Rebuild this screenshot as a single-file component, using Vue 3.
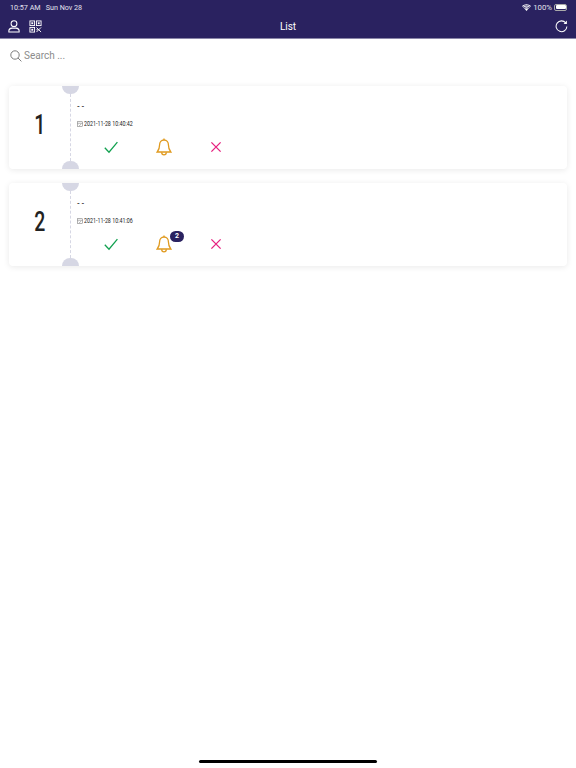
<template>
  <div class="page">
    <header class="top">
      <div class="status">
        <div class="status-left">
          <span>10:57 AM</span>
          <span>Sun Nov 28</span>
        </div>
        <div class="status-right">
          <svg width="9" height="7" viewBox="0 0 20 15">
            <path d="M10 15 L6.6 11.2 A5 5 0 0 1 13.4 11.2 Z" fill="#fff" />
            <path d="M4.8 9.2 A8 8 0 0 1 15.2 9.2 L13.9 10.7 A6 6 0 0 0 6.1 10.7 Z" fill="#fff" />
            <path d="M2.3 6.5 A11.5 11.5 0 0 1 17.7 6.5 L16.3 8 A9.5 9.5 0 0 0 3.7 8 Z" fill="#fff" />
            <path d="M0 4 A15 15 0 0 1 20 4 L18.6 5.6 A13 13 0 0 0 1.4 5.6 Z" fill="#fff" />
          </svg>
          <span class="pct">100%</span>
          <span class="battery"><i></i></span>
        </div>
      </div>
      <div class="nav">
        <div class="nav-left">
          <svg width="12" height="13" viewBox="0 0 14 15" fill="none" stroke="#fff" stroke-width="1.2">
            <circle cx="7" cy="4.2" r="3.4" />
            <path d="M1 14 V12.6 C1 10.6 3 9.6 4.6 9.4 H9.4 C11 9.6 13 10.6 13 12.6 V14 Z" />
          </svg>
          <svg width="13" height="13" viewBox="0 0 14 14" fill="none" stroke="#fff" stroke-width="1">
            <rect x="1" y="1" width="5" height="5" />
            <rect x="8" y="1" width="5" height="5" />
            <rect x="1" y="8" width="5" height="5" />
            <rect x="2.5" y="2.5" width="2" height="2" fill="#fff" stroke="none" />
            <rect x="9.5" y="2.5" width="2" height="2" fill="#fff" stroke="none" />
            <rect x="2.5" y="9.5" width="2" height="2" fill="#fff" stroke="none" />
            <path d="M8 8 L13 13 M13 8 L8 13 M8 10.5 H9.5" />
          </svg>
        </div>
        <span class="nav-title">List</span>
        <svg width="13" height="13" viewBox="0 0 14 14" fill="none" stroke="#fff" stroke-width="1.1">
          <path d="M11.6 3.2 A5.8 5.8 0 1 0 12.8 7" />
          <path d="M12.8 0.6 V4.2 H9.2 Z" fill="#fff" stroke="none" />
        </svg>
      </div>
    </header>

    <div class="search">
      <svg width="12" height="12" viewBox="0 0 12 12" fill="none" stroke="#6f6f6f" stroke-width="0.9">
        <circle cx="5" cy="5" r="4.2" />
        <path d="M8 8 L11.4 11.4" />
      </svg>
      <span>Search ...</span>
    </div>

    <div class="list">
      <div v-for="item in items" :key="item.no" class="card">
        <div class="no"><span>{{ item.no }}</span></div>
        <div class="divider"></div>
        <div class="body">
          <div class="name">- -</div>
          <div class="time">
            <svg width="6" height="6" viewBox="0 0 12 12" fill="none" stroke="#666" stroke-width="1">
              <rect x="1" y="1.5" width="10" height="9.5" />
              <path d="M1 4.5 H11 M3.5 7.5 L5 9 L8.5 6" />
            </svg>
            <span>{{ item.time }}</span>
          </div>
          <div class="actions">
            <svg class="act-check" width="16" height="13" viewBox="0 0 16 13" fill="none" stroke="#12a150" stroke-width="1.3">
              <path d="M1.8 6.8 L6 11.2 L14.4 1.2" />
            </svg>
            <div class="act-bell">
              <svg width="16" height="18" viewBox="0 0 16 18" fill="none" stroke="#e09a1f" stroke-width="1.3">
                <path d="M8 2 C5.2 2 3.6 4 3.6 6.8 C3.6 10 3 11.8 1.2 14 H14.8 C13 11.8 12.4 10 12.4 6.8 C12.4 4 10.8 2 8 2 Z" />
                <path d="M8 0.6 V2 M5.7 14.2 A2.3 2.6 0 0 0 10.3 14.2" />
              </svg>
              <span v-if="item.count" class="badge">{{ item.count }}</span>
            </div>
            <svg class="act-x" width="12" height="12" viewBox="0 0 12 12" fill="none" stroke="#e6207f" stroke-width="1.3">
              <path d="M1.4 1.4 L10.6 10.6 M10.6 1.4 L1.4 10.6" />
            </svg>
          </div>
        </div>
      </div>
    </div>

    <div class="home-bar"></div>
  </div>
</template>

<script setup>
const items = [
  { no: 1, time: '2021-11-28 10:40:42', count: 0 },
  { no: 2, time: '2021-11-28 10:41:06', count: 2 },
]
</script>

<style>
html, body {
  margin: 0;
  background: #fff;
}
</style>

<style scoped>
.page {
  position: relative;
  width: 576px;
  height: 768px;
  overflow: hidden;
  background: #fff;
  font-family: Roboto, "Liberation Sans", sans-serif;
}
.top {
  height: 38px;
  background: #2a2260;
  border-bottom: 1px solid #8a86a8;
  color: #fff;
}
.status {
  display: flex;
  justify-content: space-between;
  align-items: center;
  height: 14px;
  padding: 0 9px 0 10px;
  font-size: 7.2px;
  color: #e4e2ee;
}
.status-left {
  display: flex;
  gap: 5px;
}
.status-right {
  display: flex;
  align-items: center;
  gap: 2px;
}
.pct {
  font-size: 7.8px;
}
.battery {
  display: block;
  box-sizing: border-box;
  width: 13px;
  height: 7px;
  padding: 0.5px;
  border: 0.5px solid #aaa;
  border-radius: 2px;
}
.battery i {
  display: block;
  width: 100%;
  height: 100%;
  background: #fff;
  border-radius: 1px;
}
.nav {
  position: relative;
  display: flex;
  justify-content: space-between;
  align-items: center;
  height: 24px;
  padding: 0 8px;
}
.nav-left {
  display: flex;
  gap: 9px;
}
.nav-left svg, .nav > svg {
  display: block;
}
.nav-title {
  position: absolute;
  left: 0;
  right: 0;
  text-align: center;
  font-size: 10px;
}
.search {
  display: flex;
  align-items: center;
  gap: 2px;
  height: 33px;
  padding-left: 10px;
  font-size: 10px;
  color: #8c8c8c;
}
.list {
  display: flex;
  flex-direction: column;
  gap: 14px;
  padding: 14px 9px 0;
}
.card {
  position: relative;
  display: flex;
  height: 83px;
  background: #fff;
  border-radius: 4px;
  box-shadow: 0 1px 6px rgba(0, 0, 0, 0.09);
}
.no {
  width: 61px;
  display: flex;
  align-items: center;
  justify-content: center;
  font-size: 27px;
  font-weight: 500;
  color: #222;
  padding-bottom: 5px;
}
.no span {
  display: block;
  transform: scaleX(0.72);
}
.divider {
  position: relative;
  width: 0;
  margin: 8px 0;
  border-left: 1px dashed #d6d7e4;
}
.divider::before, .divider::after {
  content: "";
  position: absolute;
  left: -9px;
  width: 17px;
  height: 8px;
  background: #d6d7e4;
}
.divider::before {
  top: -8px;
  border-radius: 0 0 9px 9px;
}
.divider::after {
  bottom: -8px;
  border-radius: 9px 9px 0 0;
}
.body {
  flex: 1;
  padding: 16px 0 0 6px;
}
.name {
  height: 11px;
  font-size: 7px;
  font-weight: 700;
  line-height: 11px;
  color: #333;
}
.time {
  display: flex;
  align-items: center;
  gap: 1px;
  margin-top: 6px;
  height: 10px;
  font-size: 7px;
  color: #222;
}
.time span {
  display: block;
  transform: scaleX(0.76);
  transform-origin: left center;
  white-space: nowrap;
}
.actions {
  position: relative;
  display: flex;
  align-items: center;
  height: 18px;
  margin-top: 9px;
  padding-left: 26px;
}
.act-bell {
  position: relative;
  display: flex;
  margin-left: 37px;
}
.act-x {
  margin-left: 38px;
}
.badge {
  position: absolute;
  left: 14px;
  top: -4px;
  width: 14px;
  height: 11px;
  border-radius: 6px;
  background: #2a2260;
  color: #fff;
  font-size: 7px;
  font-weight: 700;
  line-height: 11px;
  text-align: center;
}
.home-bar {
  position: absolute;
  left: 199px;
  bottom: 5px;
  width: 178px;
  height: 3px;
  border-radius: 2px;
  background: #000;
}
</style>
